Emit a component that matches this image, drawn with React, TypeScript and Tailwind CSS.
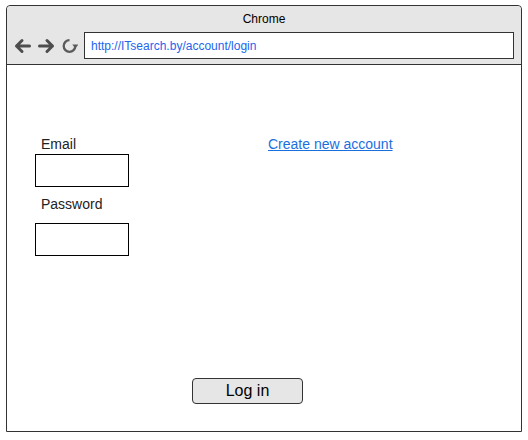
import React from 'react';

// simple browser-window wireframe of the login page
function BackArrow() {
  return (
    <svg width="17" height="16" viewBox="0 0 17 16">
      <path d="M15.5 8H2.5M8 2.5L2.5 8 8 13.5" fill="none" stroke="#4d4d4d" strokeWidth="3" strokeLinecap="round" strokeLinejoin="round" />
    </svg>
  );
}

function ForwardArrow() {
  return (
    <svg width="17" height="16" viewBox="0 0 17 16">
      <path d="M1.5 8h13M9 2.5L14.5 8 9 13.5" fill="none" stroke="#4d4d4d" strokeWidth="3" strokeLinecap="round" strokeLinejoin="round" />
    </svg>
  );
}

function Reload() {
  return (
    <svg width="16" height="16" viewBox="0 0 16 16">
      <path d="M7.5 2.2A5.8 5.8 0 1 0 13.3 8" fill="none" stroke="#5a5a5a" strokeWidth="2.3" />
      <path d="M10.3 6.6h6l-3 3.8z" fill="#5a5a5a" />
    </svg>
  );
}

export default function App() {
  return (
    <div className="w-[528px] h-[440px] bg-white pt-[5px] pl-[6px] font-['Liberation_Sans',Arial,sans-serif]">
      <div className="w-[516px] h-[427px] border border-[#333] rounded-t-[4px] flex flex-col">
        {/* chrome header */}
        <div className="h-[59px] bg-[#e6e6e6] border-b border-[#333] rounded-t-[4px] flex flex-col">
          <div className="h-[26px] flex items-center justify-center text-[12px] text-black">Chrome</div>
          <div className="flex items-center pl-[7px]">
            <div className="flex items-center gap-[7px] w-[70px]">
              <BackArrow />
              <ForwardArrow />
              <Reload />
            </div>
            <div className="w-[430px] h-[27px] bg-white border border-[#333] flex items-center pl-[6px] text-[12px] text-[#2266ee]">
              http://ITsearch.by/account/login
            </div>
          </div>
        </div>

        {/* page body */}
        <div className="flex flex-col pt-[71px]">
          <div className="flex">
            <div className="flex flex-col w-[233px] pl-[28px]">
              <div className="pl-[6px] text-[14px] leading-[16px] text-[#222]">Email</div>
              <div className="mt-[2px] w-[94px] h-[33px] border border-black" />
              <div className="mt-[9px] pl-[6px] text-[14px] leading-[16px] text-[#222]">Password</div>
              <div className="mt-[11px] w-[94px] h-[33px] border border-black" />
            </div>
            <div className="pl-[28px]">
              <a href="#" className="block text-[14px] leading-[16px] text-[#1a6fdf] underline">Create new account</a>
            </div>
          </div>
          <div className="mt-[122px] pl-[185px]">
            <button className="w-[111px] h-[26px] bg-[#e6e6e6] border border-[#333] rounded-[4px] text-[16px] text-black flex items-center justify-center">
              Log in
            </button>
          </div>
        </div>
      </div>
    </div>
  );
}
